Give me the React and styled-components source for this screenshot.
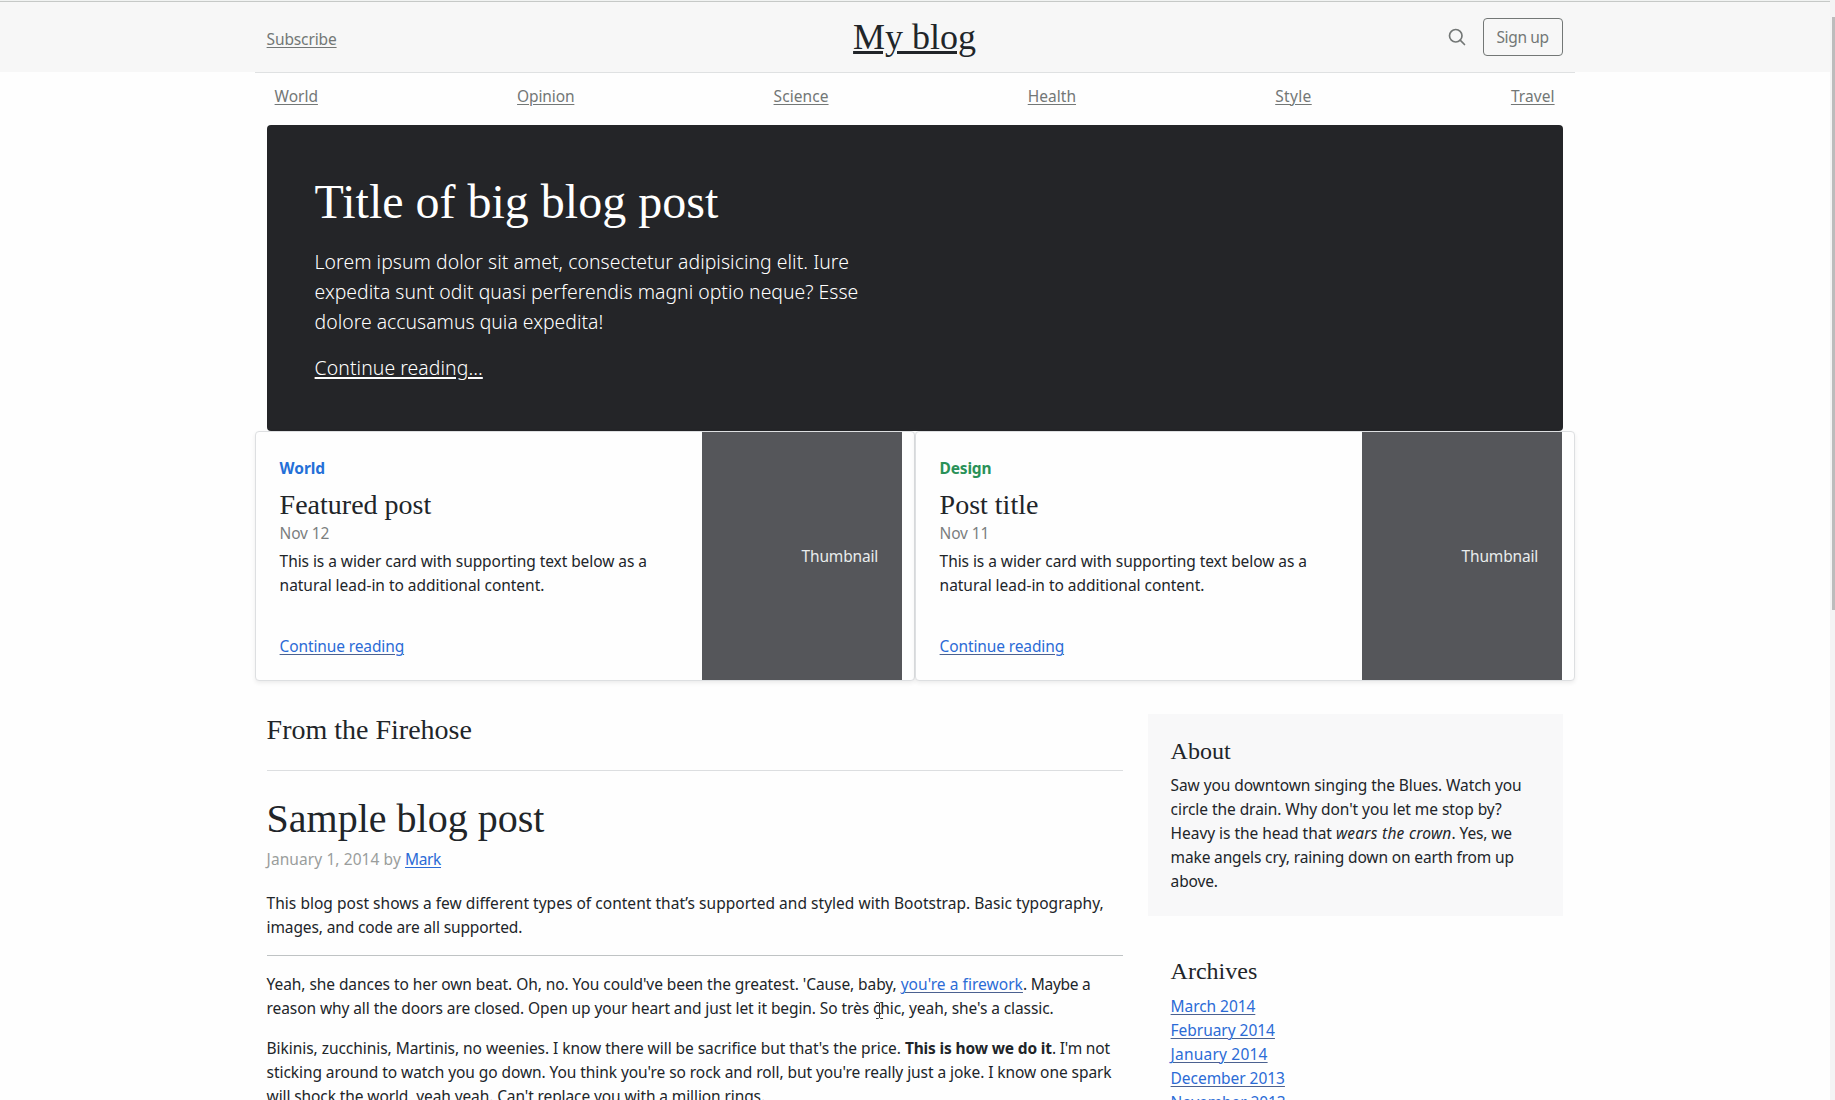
import React from 'react';
import styled, { createGlobalStyle } from 'styled-components';

const sans = '"Noto Sans", "Open Sans", sans-serif';
const serif = '"Liberation Serif", "Times New Roman", serif';
const ink = '#212529';
const muted = '#737776';
const blue = '#2b6bd6';

const GlobalStyle = createGlobalStyle`
  *, *::before, *::after { box-sizing: border-box; }
  body {
    margin: 0;
    background: #fefefe;
    color: ${ink};
    font: 400 15.5px/24px ${sans};
    font-kerning: normal;
    overflow: hidden;
  }
  h1, h2, h3, h4, p, ul { margin: 0; padding: 0; }
  h1, h2, h3, h4 { font-family: ${serif}; font-weight: 400; line-height: 1.2; }
`;

const Frame = styled.div`
  display: flex;
  height: 1100px;
  overflow: hidden;
`;
const Page = styled.div`
  flex: 1;
  min-width: 0;
`;
const Scrollbar = styled.div`
  width: 5px;
  padding: 17px 0 0 2px;
  background: #f4f4f4;
`;
const Thumb = styled.div`
  height: 593px;
  background: #bcbcbc;
`;
const TopEdge = styled.div`
  height: 2px;
  background: #f1f3f2;
  border-bottom: 1px solid #c6c9c7;
`;
const HeaderBar = styled.div`
  background: #f7f7f7;
  height: 70px;
`;
const Container = styled.div`
  width: 1320px;
  margin-left: 254.6px;
  padding: 0 12px;
`;
const Header = styled(Container)`
  display: grid;
  grid-template-columns: 1fr auto 1fr;
  align-items: center;
  height: 70px;
`;
const HeaderLeft = styled.div`
  padding-top: 4px;
`;
const HeaderRight = styled.div`
  display: flex;
  align-items: center;
  justify-content: flex-end;
`;
const Link = styled.a`
  color: ${(p) => p.$color || blue};
  text-decoration: underline;
  text-decoration-thickness: ${(p) => p.$thick || 1}px;
  text-underline-offset: 2px;
  text-decoration-color: ${(p) => p.$line || 'currentColor'};
  letter-spacing: ${(p) => p.$track || 0}px;
`;
const Brand = styled.a`
  font: 36px/40px ${serif};
  color: ${ink};
  text-decoration: underline;
  text-decoration-thickness: 3px;
  text-underline-offset: 2px;
`;
const SearchIcon = styled.svg`
  display: block;
  width: 20px;
  height: 20px;
  margin: 0 16px;
  fill: none;
  stroke: ${muted};
  stroke-width: 2;
  stroke-linecap: round;
`;
const SignUp = styled.a`
  width: 80px;
  height: 38px;
  border: 1px solid ${muted};
  border-radius: 4px;
  color: ${muted};
  line-height: 37px;
  text-align: center;
  letter-spacing: -0.35px;
`;
const NavRow = styled(Container)`
  border-top: 1px solid #dfe1e2;
  height: 53px;
  padding: 11px 20px 0;
`;
const Nav = styled.nav`
  display: flex;
  justify-content: space-between;
`;
const Hero = styled.section`
  height: 306px;
  padding: 48px;
  border-radius: 4px;
  background: #242528;
  color: #fff;
`;
const HeroTitle = styled.h1`
  font-size: 48px;
  line-height: 57.6px;
`;
const Lead = styled.p`
  margin-top: 16px;
  font-size: 19.4px;
  font-weight: 300;
  line-height: 30px;
`;
const Line = styled.span`
  display: block;
  white-space: nowrap;
  letter-spacing: ${(p) => p.$track || 0}px;
`;
const Run = styled.span`
  letter-spacing: ${(p) => p.$track || 0}px;
`;
const Bold = styled.strong`
  font-weight: 700;
  letter-spacing: -0.154px;
`;
const Italic = styled.em`
  letter-spacing: 0.246px;
`;
const Cards = styled.section`
  display: flex;
  width: 1320px;
  margin-left: 254.6px;
`;
const Card = styled.article`
  display: flex;
  flex: 1;
  height: 250px;
  border: 1px solid #dddfe1;
  border-radius: 4px;
  box-shadow: 0 2px 4px rgba(0, 0, 0, 0.075);
  background: #fefefe;
`;
const CardBody = styled.div`
  flex: 1;
  padding: 24px;
`;
const Category = styled.strong`
  display: block;
  margin-bottom: 8px;
  font-weight: 700;
  color: ${(p) => p.$color};
  letter-spacing: ${(p) => p.$track}px;
`;
const CardTitle = styled.h3`
  height: 33px;
  font-size: 28px;
`;
const CardDate = styled.div`
  margin-bottom: 4px;
  color: #7b7e7f;
  letter-spacing: -0.164px;
`;
const CardMore = styled.div`
  margin-top: 37px;
`;
const Thumbnail = styled.div`
  display: flex;
  align-items: center;
  width: 200px;
  margin-right: 12px;
  padding-left: 100px;
  background: #55565a;
  color: #e9ecec;
  letter-spacing: -0.175px;
`;
const Main = styled(Container)`
  display: flex;
  gap: 24px;
  padding-top: 32px;
`;
const Content = styled.main`
  width: 856px;
`;
const SectionTitle = styled.h3`
  height: 58px;
  border-bottom: 1px solid #dcdee0;
  font-size: 28px;
`;
const PostTitle = styled.h2`
  margin: 24px 0 4px;
  font-size: 40px;
`;
const PostMeta = styled.p`
  margin-bottom: 20px;
  color: #9a9d9c;
  letter-spacing: 0.084px;
`;
const Paragraph = styled.p`
  position: relative;
  margin-bottom: 16px;
`;
const Rule = styled.div`
  margin-bottom: 16px;
  border-top: 1px solid #bfc3c4;
`;
const Sidebar = styled.aside`
  width: 416px;
  padding: 1px 0 0 1px;
`;
const About = styled.section`
  height: 202px;
  padding: 23px;
  background: #f8f8f9;
`;
const SideTitle = styled.h4`
  height: 36px;
  font-size: 24px;
`;
const Archives = styled.section`
  padding: 41px 23px;
`;
const ArchiveList = styled.ul`
  padding-top: 1px;
  list-style: none;
`;
const TextCursor = styled.svg`
  position: absolute;
  left: 608px;
  top: 30px;
  width: 9px;
  height: 17px;
  fill: none;
  stroke: #333;
`;

const navItems = [
  ['World', -0.023],
  ['Opinion', -0.125],
  ['Science', 0.078],
  ['Health', 0.034],
  ['Style', 0.35],
  ['Travel', 0.076],
];
const posts = [
  { category: 'World', color: '#2470d8', track: -0.042, title: 'Featured post', date: 'Nov 12' },
  { category: 'Design', color: '#2a9158', track: -0.198, title: 'Post title', date: 'Nov 11' },
];
const archives = [
  ['March 2014', -0.066],
  ['February 2014', -0.038],
  ['January 2014', 0.202],
  ['December 2013', -0.046],
  ['November 2013', -0.087],
];
const lineBlue = '#4b6190';

function PostCard({ post }) {
  return (
    <Card>
      <CardBody>
        <Category $color={post.color} $track={post.track}>{post.category}</Category>
        <CardTitle>{post.title}</CardTitle>
        <CardDate>{post.date}</CardDate>
        <p>
          <Line $track={-0.066}>This is a wider card with supporting text below as a</Line>
          <Line $track={-0.032}>natural lead-in to additional content.</Line>
        </p>
        <CardMore>
          <Link $track={-0.122} $line={lineBlue}>Continue reading</Link>
        </CardMore>
      </CardBody>
      <Thumbnail>Thumbnail</Thumbnail>
    </Card>
  );
}

export default function App() {
  return (
    <>
      <GlobalStyle />
      <Frame>
        <Page>
          <TopEdge />
          <HeaderBar>
            <Header as="header">
              <HeaderLeft>
                <Link $color={muted} $track={-0.129}>Subscribe</Link>
              </HeaderLeft>
              <Brand>My blog</Brand>
              <HeaderRight>
                <SearchIcon viewBox="0 0 24 24">
                  <circle cx="10.5" cy="10.5" r="7.5" />
                  <path d="M21 21l-5.2-5.2" />
                </SearchIcon>
                <SignUp>Sign up</SignUp>
              </HeaderRight>
            </Header>
          </HeaderBar>
          <NavRow>
            <Nav>
              {navItems.map(([name, track]) => (
                <Link key={name} $color={muted} $track={track}>{name}</Link>
              ))}
            </Nav>
          </NavRow>
          <Container>
            <Hero>
              <HeroTitle>Title of big blog post</HeroTitle>
              <Lead>
                <Line $track={0.044}>Lorem ipsum dolor sit amet, consectetur adipisicing elit. Iure</Line>
                <Line $track={0.022}>expedita sunt odit quasi perferendis magni optio neque? Esse</Line>
                <Line $track={0.008}>dolore accusamus quia expedita!</Line>
              </Lead>
              <Lead>
                <Link $color="#fff" $track={0.069} $thick={2}>Continue reading...</Link>
              </Lead>
            </Hero>
          </Container>
          <Cards>
            {posts.map((post) => <PostCard key={post.title} post={post} />)}
          </Cards>
          <Main>
            <Content>
              <SectionTitle>From the Firehose</SectionTitle>
              <article>
                <PostTitle>Sample blog post</PostTitle>
                <PostMeta>
                  January 1, 2014 by <Link $track={-0.358}>Mark</Link>
                </PostMeta>
                <Paragraph>
                  <Line $track={0.027}>This blog post shows a few different types of content that’s supported and styled with Bootstrap. Basic typography,</Line>
                  <Line $track={-0.128}>images, and code are all supported.</Line>
                </Paragraph>
                <Rule />
                <Paragraph>
                  <Line $track={-0.066}>
                    Yeah, she dances to her own beat. Oh, no. You could've been the greatest. 'Cause, baby,{' '}
                    <Link $track={0.043} $line={lineBlue}>you're a firework</Link>
                    <Run $track={-0.25}>. Maybe a</Run>
                  </Line>
                  <Line $track={-0.088}>reason why all the doors are closed. Open up your heart and just let it begin. So très chic, yeah, she's a classic.</Line>
                  <TextCursor viewBox="0 0 9 17">
                    <path d="M1 .5h2.5l1 1 1-1H8M1 16.5h2.5l1-1 1 1H8M4.500 1v15M3 11.500h3" />
                  </TextCursor>
                </Paragraph>
                <Paragraph>
                  <Line $track={-0.05}>
                    Bikinis, zucchinis, Martinis, no weenies. I know there will be sacrifice but that's the price.{' '}
                    <Bold>This is how we do it</Bold>
                    <Run $track={-0.171}>. I'm not</Run>
                  </Line>
                  <Line $track={-0.07}>sticking around to watch you go down. You think you're so rock and roll, but you're really just a joke. I know one spark</Line>
                  <Line $track={-0.105}>will shock the world, yeah yeah. Can't replace you with a million rings.</Line>
                </Paragraph>
              </article>
            </Content>
            <Sidebar>
              <About>
                <SideTitle>About</SideTitle>
                <p>
                  <Line $track={-0.09}>Saw you downtown singing the Blues. Watch you</Line>
                  <Line $track={-0.059}>circle the drain. Why don't you let me stop by?</Line>
                  <Line $track={-0.04}>
                    Heavy is the head that <Italic>wears the crown</Italic>
                    <Run $track={-0.129}>. Yes, we</Run>
                  </Line>
                  <Line $track={-0.144}>make angels cry, raining down on earth from up</Line>
                  <Line $track={-0.128}>above.</Line>
                </p>
              </About>
              <Archives>
                <SideTitle>Archives</SideTitle>
                <ArchiveList>
                  {archives.map(([month, track]) => (
                    <li key={month}><Link $track={track} $line={lineBlue}>{month}</Link></li>
                  ))}
                </ArchiveList>
              </Archives>
            </Sidebar>
          </Main>
        </Page>
        <Scrollbar>
          <Thumb />
        </Scrollbar>
      </Frame>
    </>
  );
}
